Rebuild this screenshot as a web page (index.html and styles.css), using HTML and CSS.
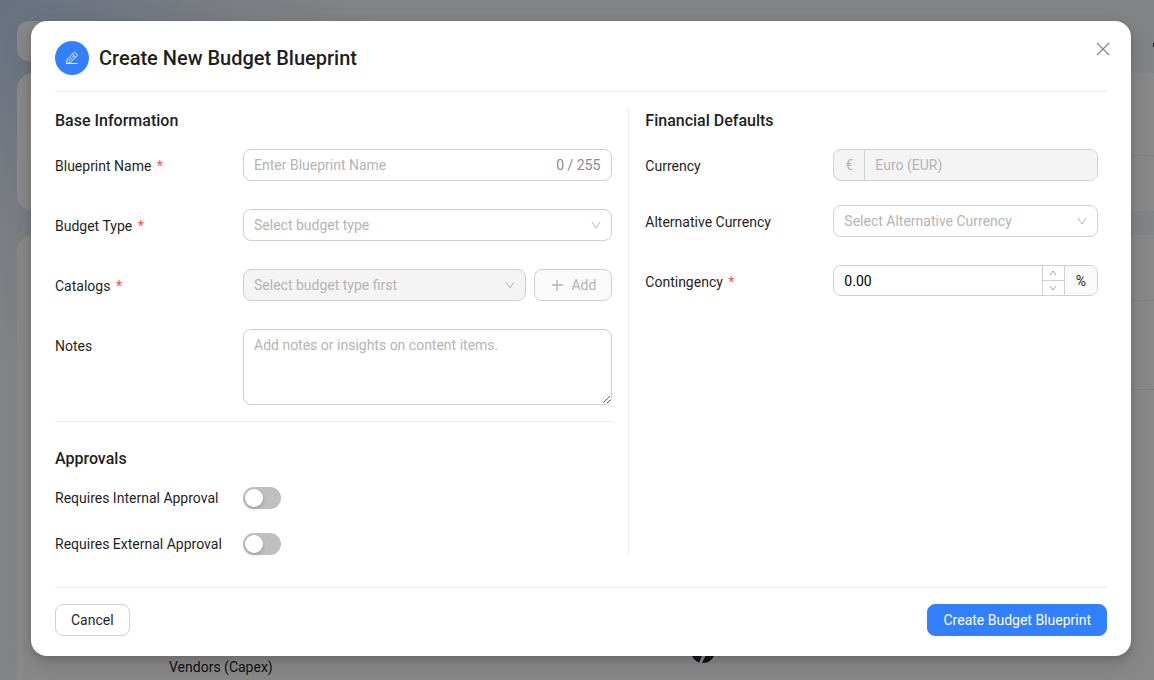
FILE: index.html
```html
<!DOCTYPE html>
<html lang="en">

<head>
    <meta charset="utf-8">
    <meta name="viewport" content="width=device-width, initial-scale=1">
    <title>Create New Budget Blueprint</title>
    <link rel="stylesheet" href="styles.css">
</head>

<body>
    <div class="page">
        <div class="toolbar"><span class="dot"></span></div>
        <div class="panel summary">
            <div class="line"></div>
        </div>
        <div class="panel listing">
            <div class="line"></div>
            <div class="line second"></div>
            <div class="listing-row">
                <span>Vendors (Capex)</span>
                <svg class="avatar" viewBox="0 0 24 24" aria-hidden="true">
                    <circle cx="12" cy="12" r="12" fill="#24243f" />
                    <path d="M12 14h4l-5 10H8z" fill="#fff" />
                </svg>
            </div>
        </div>
    </div>

    <div class="mask">
        <dialog class="modal" open aria-labelledby="modal-title">
            <header class="modal-header">
                <span class="title-icon">
                    <svg viewBox="0 0 14 14" width="14" height="14" aria-hidden="true">
                        <path d="M1.500 12.500l.6-4L8.800 1.800q.7-.6 1.400 0l1.700 1.700q.6.700 0 1.400L5.200 11.600l-3.700.9h11M7.500 3.200l3 3M9 4.700L3.700 10" />
                    </svg>
                </span>
                <h1 id="modal-title">Create New Budget Blueprint</h1>
                <button type="button" class="close" aria-label="Close">
                    <svg viewBox="0 0 14 14" width="14" height="14" aria-hidden="true">
                        <path d="M1 1l12 12M13 1L1 13" />
                    </svg>
                </button>
            </header>

            <form class="form">
                <div class="columns">
                    <div class="main-column">
                        <section class="fields">
                            <h2>Base Information</h2>
                            <div class="field">
                                <label for="name">Blueprint Name <span class="required">*</span></label>
                                <div class="control box">
                                    <input type="text" id="name" maxlength="255" placeholder="Enter Blueprint Name">
                                    <span class="count">0 / 255</span>
                                </div>
                            </div>
                            <div class="field">
                                <label for="type">Budget Type <span class="required">*</span></label>
                                <div class="control box">
                                    <select id="type">
                                        <option>Select budget type</option>
                                    </select>
                                    <svg class="arrow" viewBox="0 0 12 12" aria-hidden="true"><path d="M2 3l4 6 4-6" /></svg>
                                </div>
                            </div>
                            <div class="field">
                                <label for="catalogs">Catalogs <span class="required">*</span></label>
                                <div class="control catalog">
                                    <div class="box disabled">
                                        <select id="catalogs" disabled>
                                            <option>Select budget type first</option>
                                        </select>
                                        <svg class="arrow" viewBox="0 0 12 12" aria-hidden="true"><path d="M2 3l4 6 4-6" /></svg>
                                    </div>
                                    <button type="button" class="btn add" disabled>
                                        <svg viewBox="0 0 14 14" width="14" height="14" aria-hidden="true"><path d="M7 2v11M2 7h11" /></svg>
                                        Add
                                    </button>
                                </div>
                            </div>
                            <div class="field">
                                <label for="notes">Notes</label>
                                <textarea id="notes" class="control" placeholder="Add notes or insights on content items."></textarea>
                            </div>
                        </section>

                        <section class="approvals">
                            <h2>Approvals</h2>
                            <div class="approval">
                                <label for="internal">Requires Internal Approval</label>
                                <input type="checkbox" role="switch" class="switch" id="internal">
                            </div>
                            <div class="approval">
                                <label for="external">Requires External Approval</label>
                                <input type="checkbox" role="switch" class="switch" id="external">
                            </div>
                        </section>
                    </div>

                    <section class="side-column">
                        <h2>Financial Defaults</h2>
                        <div class="field">
                            <label for="currency">Currency</label>
                            <div class="control box disabled">
                                <span class="prefix">€</span>
                                <input type="text" id="currency" value="Euro (EUR)" disabled>
                            </div>
                        </div>
                        <div class="field">
                            <label for="alternative">Alternative Currency</label>
                            <div class="control box">
                                <select id="alternative">
                                    <option>Select Alternative Currency</option>
                                </select>
                                <svg class="arrow" viewBox="0 0 12 12" aria-hidden="true"><path d="M2 3l4 6 4-6" /></svg>
                            </div>
                        </div>
                        <div class="field">
                            <label for="contingency">Contingency <span class="required">*</span></label>
                            <div class="control box number">
                                <input type="text" inputmode="decimal" id="contingency" value="0.00">
                                <span class="stepper">
                                    <button type="button" aria-label="Increase">
                                        <svg viewBox="0 0 8 8" width="8" height="8" aria-hidden="true"><path d="M1 6l3-4 3 4" /></svg>
                                    </button>
                                    <button type="button" aria-label="Decrease">
                                        <svg viewBox="0 0 8 8" width="8" height="8" aria-hidden="true"><path d="M1 2l3 4 3-4" /></svg>
                                    </button>
                                </span>
                                <span class="suffix">%</span>
                            </div>
                        </div>
                    </section>
                </div>

                <footer class="modal-footer">
                    <button type="button" class="btn">Cancel</button>
                    <button type="submit" class="btn primary">Create Budget Blueprint</button>
                </footer>
            </form>
        </dialog>
    </div>
</body>

</html>
```
FILE: styles.css
```css
* {
    box-sizing: border-box;
}

body {
    margin: 0;
    font-family: Roboto, "Liberation Sans", sans-serif;
    font-size: 14px;
    line-height: 22px;
    color: #1f1f1f;
}

input, select, textarea, button {
    font: inherit;
    color: inherit;
}

h1, h2 {
    margin: 0;
    font-weight: 500;
}

h1 {
    font-size: 20px;
    line-height: 28px;
}

h2 {
    font-size: 16px;
    line-height: 26px;
}

/* page behind the dialog */
.page {
    height: 100vh;
    overflow: hidden;
    padding: 21px 0 0 17px;
    background: radial-gradient(circle at 0 0, #bccfed 0, #dfe4ee 220px, #eff1f4 380px);
}

.toolbar {
    display: flex;
    justify-content: flex-end;
    align-items: center;
    height: 40px;
    margin-bottom: 12px;
    background: linear-gradient(90deg, #f8f8f8 60px, transparent 60px);
    border-radius: 12px;
}

.dot {
    width: 1px;
    height: 4px;
    margin-top: 8px;
    background: #333;
}

.panel {
    background: #fafafa;
    border-radius: 16px 0 0 16px;
}

.summary {
    height: 138px;
    margin-bottom: 24px;
    padding-top: 82px;
}

.listing {
    height: 500px;
    padding-top: 65px;
}

.line {
    margin-left: 24px;
    border-top: 1px solid #e8e8e8;
}

.line.second {
    margin-top: 88px;
}

.listing-row {
    display: grid;
    grid-template-columns: 522px 24px;
    align-items: end;
    padding-left: 152px;
    height: 288px;
}

.avatar {
    width: 24px;
    height: 24px;
    margin-bottom: 15px;
}

/* dialog */
.mask {
    position: absolute;
    inset: 0;
    padding: 21px 23px 24px 31px;
    background: rgba(0, 0, 0, 0.45);
}

.modal {
    position: static;
    width: 100%;
    max-width: none;
    margin: 0;
    padding: 20px 24px;
    border: 0;
    border-radius: 16px;
    background: #fff;
    color: inherit;
    box-shadow: 0 6px 16px rgba(0, 0, 0, 0.08), 0 3px 6px rgba(0, 0, 0, 0.12), 0 9px 28px 8px rgba(0, 0, 0, 0.05);
}

.modal-header {
    display: flex;
    align-items: center;
    gap: 10px;
    padding-bottom: 16px;
    border-bottom: 1px solid #ebebeb;
}

.title-icon {
    display: grid;
    place-items: center;
    width: 34px;
    height: 34px;
    border-radius: 50%;
    background: #3380ff;
    color: #fff;
}

.title-icon svg {
    fill: none;
    stroke: currentColor;
    stroke-width: 0.9;
}

.close {
    display: grid;
    place-items: center;
    align-self: flex-start;
    width: 22px;
    height: 22px;
    margin: -3px -7px 0 auto;
    padding: 0;
    border: 0;
    background: none;
}

.close svg {
    fill: none;
    stroke: #8a8a8a;
    stroke-width: 1.4;
}

.columns {
    display: grid;
    grid-template-columns: 54.5% 45.5%;
    padding: 16px 0 32px;
}

.main-column {
    padding-right: 16px;
}

.side-column {
    padding: 0 9px 0 16px;
    border-left: 1px solid #ebebeb;
}

.fields {
    padding-bottom: 16px;
    border-bottom: 1px solid #ebebeb;
}

.columns h2 {
    margin-bottom: 15px;
}

.field {
    display: grid;
    grid-template-columns: 188px 1fr;
    align-items: start;
    margin-bottom: 26px;
}

.side-column .field {
    margin-bottom: 22px;
}

.side-column .field + .field {
    margin-bottom: 26px;
}

.fields .field:last-child {
    margin-bottom: 0;
}

.field label {
    line-height: 34px;
}

.required {
    margin-left: 2px;
    color: #ff4d4f;
}

.control {
    min-width: 0;
}

.box {
    display: flex;
    align-items: center;
    position: relative;
    height: 32px;
    border: 1px solid #d0d0d0;
    border-radius: 8px;
    background: #fff;
    overflow: hidden;
}

.box input, .box select {
    flex: 1;
    min-width: 0;
    width: 100%;
    height: 30px;
    padding: 0 11px 0 10px;
    border: 0;
    outline: 0;
    background: none;
    appearance: none;
}

.box select {
    color: #b4b4b4;
    opacity: 1;
}

::placeholder {
    color: #b4b4b4;
    opacity: 1;
}

.box.disabled, .box.disabled input {
    background: #f4f4f4;
    color: #b4b4b4;
}

.count {
    padding-right: 11px;
    white-space: nowrap;
    color: #8a8a8a;
}

.arrow {
    position: absolute;
    right: 9px;
    width: 12px;
    height: 12px;
    fill: none;
    stroke: #b4b4b4;
    pointer-events: none;
}

.catalog {
    display: grid;
    grid-template-columns: 1fr auto;
    gap: 8px;
}

.btn {
    height: 32px;
    padding: 0 15px;
    border: 1px solid #d0d0d0;
    border-radius: 8px;
    background: #fff;
}

.btn.primary {
    border-color: #3380ff;
    background: #3380ff;
    color: #fff;
}

.btn.add {
    display: flex;
    align-items: center;
    gap: 7px;
    background: #fafafa;
    color: #b4b4b4;
}

.add svg {
    fill: none;
    stroke: currentColor;
    stroke-width: 1.3;
}

textarea {
    display: block;
    height: 76px;
    padding: 4px 10px;
    border: 1px solid #d0d0d0;
    border-radius: 8px;
    outline: 0;
    resize: vertical;
}

.prefix, .suffix {
    flex: none;
    width: 31px;
    line-height: 30px;
    text-align: center;
    border-right: 1px solid #d0d0d0;
}

.number {
    height: 31px;
}

.number input {
    color: #000;
}

.suffix {
    width: 33px;
    border-right: 0;
    border-left: 1px solid #d0d0d0;
    background: #fafafa;
}

.stepper {
    display: grid;
    width: 22px;
    height: 100%;
    border-left: 1px solid #d0d0d0;
}

.stepper button {
    display: grid;
    place-items: center;
    padding: 0;
    border: 0;
    background: none;
}

.stepper button + button {
    border-top: 1px solid #d0d0d0;
}

.stepper svg {
    fill: none;
    stroke: #8a8a8a;
    stroke-width: 0.8;
}

.approvals {
    padding-top: 24px;
}

.approval {
    display: grid;
    grid-template-columns: 188px auto;
    justify-content: start;
    align-items: center;
    margin-bottom: 24px;
}

.approval:last-child {
    margin-bottom: 0;
}

.switch {
    appearance: none;
    width: 38px;
    height: 22px;
    margin: 0;
    padding: 2px;
    border-radius: 11px;
    background: #bfbfbf;
}

.switch::before {
    content: "";
    display: block;
    width: 18px;
    height: 18px;
    border-radius: 50%;
    background: #fff;
    box-shadow: 0 2px 4px rgba(0, 35, 11, 0.2);
}

.switch:checked {
    background: #3380ff;
}

.switch:checked::before {
    margin-left: 16px;
}

.modal-footer {
    display: flex;
    justify-content: space-between;
    padding-top: 16px;
    border-top: 1px solid #ebebeb;
}
```
